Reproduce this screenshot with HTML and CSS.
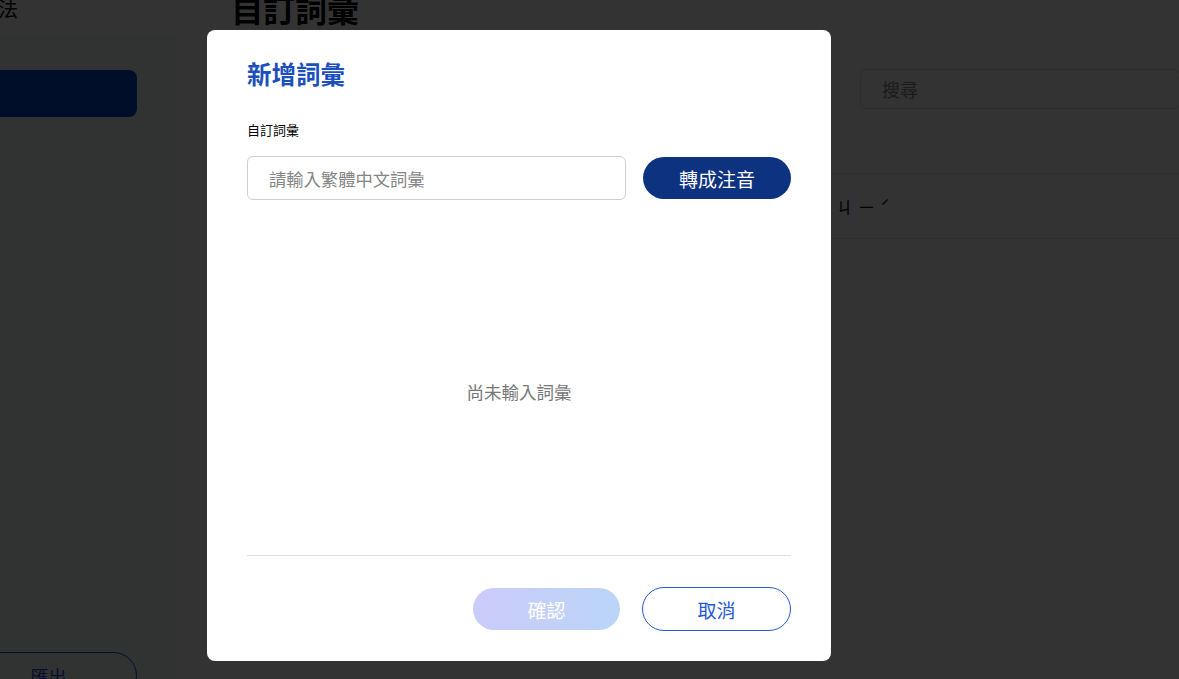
FILE: index.html
```html
<!DOCTYPE html>
<html lang="zh-Hant">
<head>
  <meta charset="UTF-8">
  <title>自訂詞彙</title>
  <link rel="stylesheet" href="styles.css">
</head>
<body>
  <div class="app">
    <!-- 側邊欄 -->
    <aside class="sidebar">
      <div class="sidebar__head">輸入法</div>
      <a class="sidebar__item active" href="#"></a>
      <a class="sidebar__export" href="#">匯出</a>
    </aside>

    <!-- 主要內容 -->
    <main class="main">
      <h1 class="main__title">自訂詞彙</h1>
      <div class="toolbar">
        <input class="search" type="text" placeholder="搜尋">
      </div>
      <div class="table">
        <div class="table__row table__row--head">
          <span class="cell cell--word"></span>
          <span class="cell cell--zhuyin"></span>
        </div>
        <div class="table__row">
          <span class="cell cell--word"></span>
          <span class="cell cell--zhuyin">ㄐㄧˊ</span>
        </div>
      </div>
    </main>
  </div>

  <!-- 新增詞彙 對話框 -->
  <div class="overlay">
    <div class="modal">
      <h2 class="modal__title">新增詞彙</h2>
      <div class="modal__label">自訂詞彙</div>
      <div class="modal__input-row">
        <input class="modal__input" type="text" placeholder="請輸入繁體中文詞彙">
        <button class="btn btn--navy">轉成注音</button>
      </div>
      <div class="modal__empty">尚未輸入詞彙</div>
      <div class="modal__footer">
        <button class="btn btn--confirm" disabled>確認</button>
        <button class="btn btn--outline">取消</button>
      </div>
    </div>
  </div>
</body>
</html>
```

FILE: styles.css
```css
body {
  margin: 0;
  height: 100vh;
  overflow: hidden;
  background: #fff;
  font-family: "Noto Sans CJK TC", "Noto Sans", sans-serif;
  color: #000;
}

.app {
  display: flex;
  width: 1280px;
  height: 740px;
  margin: -20px 0 0 -60px;
}

.sidebar {
  display: flex;
  flex-direction: column;
  width: 237px;
  flex-shrink: 0;
  background: #f6f7f9;
  box-sizing: border-box;
  padding-bottom: 21px;
}

.sidebar__head {
  display: flex;
  align-items: center;
  height: 57px;
  padding-left: 18px;
  font-size: 20px;
  background: #fff;
  border-bottom: 1px solid #eee;
  box-sizing: border-box;
}

.sidebar__item {
  display: block;
  height: 47px;
  margin: 33px 40px 0 20px;
  border-radius: 8px;
  background: #0548cc;
}

.sidebar__export {
  display: flex;
  justify-content: center;
  align-items: center;
  height: 47px;
  margin: auto 40px 0 20px;
  border: 1px solid #1c4bc4;
  border-radius: 24px;
  color: #1c4bc4;
  text-decoration: none;
  font-size: 18px;
  box-sizing: border-box;
}

.main {
  flex: 1;
  padding: 0 40px 0 54px;
  background: #fff;
}

.main__title {
  margin: 8px 0 0;
  font-size: 32px;
  line-height: 40px;
  font-weight: 700;
}

.toolbar {
  display: flex;
  justify-content: flex-end;
  margin-top: 41px;
}

.search {
  width: 320px;
  height: 40px;
  padding: 0 21px;
  border: 1px solid #ddd;
  border-radius: 6px;
  font: 18px "Noto Sans CJK TC", sans-serif;
  box-sizing: border-box;
}

.search::placeholder {
  color: #888;
}

.table__row {
  display: flex;
  align-items: center;
  height: 64px;
  border-bottom: 1px solid #e4e4e4;
  font-size: 17px;
}

.table__row--head {
  height: 64px;
}

.cell--word {
  width: 605px;
  padding-left: 20px;
  box-sizing: border-box;
}

.cell--zhuyin {
  letter-spacing: 5px;
}

/* 對話框 */
.overlay {
  position: fixed;
  top: 0;
  right: 0;
  bottom: 0;
  left: 0;
  display: flex;
  align-items: flex-start;
  padding: 30px 0 0 207px;
  background: rgba(0, 0, 0, 0.8);
}

.modal {
  display: flex;
  flex-direction: column;
  width: 624px;
  padding: 28px 40px 30px;
  background: #fff;
  border-radius: 8px;
  box-sizing: border-box;
}

.modal__title {
  margin: 0;
  font-size: 24.5px;
  line-height: 32px;
  font-weight: 700;
  color: #1b4fbd;
}

.modal__label {
  margin-top: 30px;
  font-size: 13px;
  line-height: 20px;
}

.modal__input-row {
  display: flex;
  align-items: center;
  gap: 17px;
  margin-top: 16px;
}

.modal__input {
  flex: 1;
  height: 44px;
  padding: 0 21px;
  border: 1px solid #cfcfcf;
  border-radius: 6px;
  font: 17.3px "Noto Sans CJK TC", sans-serif;
  box-sizing: border-box;
}

.modal__input::placeholder {
  color: #858585;
}

.modal__empty {
  display: flex;
  justify-content: center;
  align-items: center;
  height: 356px;
  padding-top: 27px;
  border-bottom: 1px solid #ddd;
  color: #777;
  font-size: 17.5px;
  box-sizing: border-box;
}

.modal__footer {
  display: flex;
  justify-content: flex-end;
  align-items: center;
  gap: 22px;
  margin-top: 31px;
}

.btn {
  height: 42px;
  width: 148px;
  border: none;
  border-radius: 22px;
  font: 19px "Noto Sans CJK TC", sans-serif;
  cursor: pointer;
  box-sizing: border-box;
}

.btn--navy {
  background: #0d327f;
  color: #fff;
}

.btn--confirm {
  width: 147px;
  background: linear-gradient(90deg, #cbcbf9, #bad5f7);
  color: #fff;
}

.btn--outline {
  width: 149px;
  height: 44px;
  background: #fff;
  border: 1.5px solid #2658d3;
  color: #2658d3;
}
```
